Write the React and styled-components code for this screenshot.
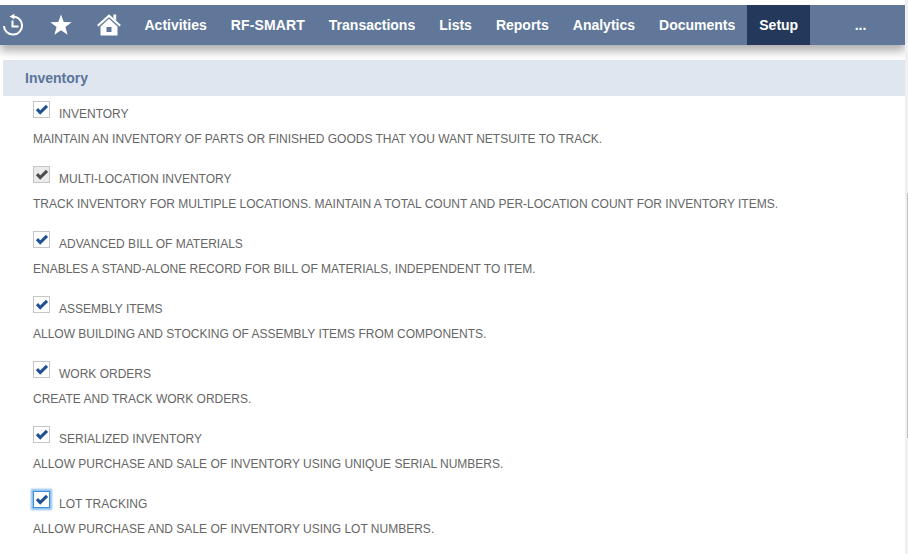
import React from "react";
import styled, { createGlobalStyle } from "styled-components";

const GlobalStyle = createGlobalStyle`
  * { box-sizing: border-box; }
  body {
    margin: 0;
    background: #fff;
    overflow: hidden;
    font-family: "Liberation Sans", Arial, sans-serif;
  }
`;

const Page = styled.div`
  display: flex;
  width: 908px;
  height: 554px;
  overflow: hidden;
`;

const Content = styled.main`
  width: 905px;
  height: 554px;
  padding-top: 5px;
  overflow: hidden;
`;

const NavBar = styled.nav`
  display: flex;
  align-items: stretch;
  height: 40px;
  background: #607799;
  box-shadow: 0 6px 9px 0 rgba(0, 0, 0, 0.32);
  clip-path: inset(0 0 -20px 0);
`;

const NavIcons = styled.div`
  width: 132.5px;
  flex: none;
  svg { display: block; }
`;

const NavItem = styled.a`
  display: flex;
  align-items: center;
  flex: none;
  padding: 0 12px;
  color: #fff;
  font-size: 14px;
  font-weight: 700;
  line-height: 16px;
  white-space: nowrap;
  background: ${(p) => (p.$active ? "#24385b" : "transparent")};
`;

const WideItem = styled(NavItem)`
  letter-spacing: 0.12px;
`;

const More = styled(NavItem)`
  margin-left: 32.5px;
`;

const SectionTitle = styled.h2`
  display: flex;
  align-items: center;
  position: relative;
  height: 36px;
  margin: 15px 0 0 3px;
  padding-left: 22px;
  color: #5a7499;
  background: #dfe6ef;
  font-size: 14px;
  font-weight: 700;
`;

const FeatureList = styled.div`
  padding: 5px 0 0 33px;
`;

const Feature = styled.section`
  height: 65px;
  color: #666;
  font-size: 12px;
  line-height: 14px;
  white-space: nowrap;
`;

const FeatureHead = styled.div`
  display: flex;
  height: 31px;
`;

const Box = styled.span`
  flex: none;
  width: 17px;
  height: 17px;
  border: 1px solid ${(p) => (p.$focused ? "#3f8fdc" : "#c6c6c6")};
  background: ${(p) => (p.$locked ? "#ebebeb" : "#fff")};
  color: ${(p) => (p.$locked ? "#4d4d4d" : "#1f5196")};
  box-shadow: ${(p) => (p.$focused ? "0 0 2px 2px #88bdf0" : "none")};
  svg { display: block; }
`;

const Label = styled.span`
  margin: 6px 0 0 9px;
`;

const Description = styled.div`
  height: 14px;
`;

const ScrollTrack = styled.div`
  width: 3px;
  height: 554px;
  padding: 193px 0 0 2px;
  background: #f0f0f0;
`;

const ScrollThumb = styled.div`
  height: 245px;
  background: #c1c1c1;
`;

const menu = ["Activities", "RF-SMART", "Transactions", "Lists", "Reports", "Analytics", "Documents", "Setup"];

const features = [
  ["INVENTORY", "MAINTAIN AN INVENTORY OF PARTS OR FINISHED GOODS THAT YOU WANT NETSUITE TO TRACK."],
  ["MULTI-LOCATION INVENTORY", "TRACK INVENTORY FOR MULTIPLE LOCATIONS. MAINTAIN A TOTAL COUNT AND PER-LOCATION COUNT FOR INVENTORY ITEMS.", "locked"],
  ["ADVANCED BILL OF MATERIALS", "ENABLES A STAND-ALONE RECORD FOR BILL OF MATERIALS, INDEPENDENT TO ITEM."],
  ["ASSEMBLY ITEMS", "ALLOW BUILDING AND STOCKING OF ASSEMBLY ITEMS FROM COMPONENTS."],
  ["WORK ORDERS", "CREATE AND TRACK WORK ORDERS."],
  ["SERIALIZED INVENTORY", "ALLOW PURCHASE AND SALE OF INVENTORY USING UNIQUE SERIAL NUMBERS."],
  ["LOT TRACKING", "ALLOW PURCHASE AND SALE OF INVENTORY USING LOT NUMBERS.", "focused"],
];

function ShortcutIcons() {
  return (
    <svg width="132" height="40" viewBox="0 5 132 40" fill="none" stroke="#fff">
      <path d="M12.5 16.4 A9.1 9.1 0 1 1 3.9 26" strokeWidth="2" />
      <path d="M9.6 16.6 L14.4 13.8 V19.6 Z" fill="#fff" stroke="none" />
      <path d="M12.5 20.5 V26.5 H18.5" strokeWidth="2" />
      <path
        d="M61 14.5 L63.7 22 L71.7 22.2 L65.4 27 L67.6 34.8 L61 30.3 L54.4 34.8 L56.6 27 L50.3 22.2 L58.3 22 Z"
        fill="#fff"
        stroke="none"
      />
      <path d="M97.8 25.8 L109 15.6 L120.2 25.8" strokeWidth="2.1" />
      <path d="M113.4 14.5 H116.2 V20.5 L113.4 18 Z" fill="#fff" stroke="none" />
      <path
        d="M109 18.7 L117.5 26.4 V35.5 H100.5 V26.4 Z M106.5 27 V32 H111.5 V27 Z"
        fill="#fff"
        fillRule="evenodd"
        stroke="none"
      />
    </svg>
  );
}

function CheckMark() {
  return (
    <svg width="15" height="15" viewBox="0 0 15 15">
      <path d="M3 7.2 L6.2 10.5 L13 3.8" fill="none" stroke="currentColor" strokeWidth="3.1" />
    </svg>
  );
}

export default function App() {
  return (
    <>
      <GlobalStyle />
      <Page>
        <Content>
          <NavBar>
            <NavIcons><ShortcutIcons /></NavIcons>
            {menu.map((name) => {
              const Item = name === "RF-SMART" ? WideItem : NavItem;
              return <Item key={name} $active={name === "Setup"}>{name}</Item>;
            })}
            <More>...</More>
          </NavBar>
          <SectionTitle>Inventory</SectionTitle>
          <FeatureList>
            {features.map(([name, text, state]) => (
              <Feature key={name}>
                <FeatureHead>
                  <Box $locked={state === "locked"} $focused={state === "focused"}><CheckMark /></Box>
                  <Label>{name}</Label>
                </FeatureHead>
                <Description>{text}</Description>
              </Feature>
            ))}
          </FeatureList>
        </Content>
        <ScrollTrack><ScrollThumb /></ScrollTrack>
      </Page>
    </>
  );
}
